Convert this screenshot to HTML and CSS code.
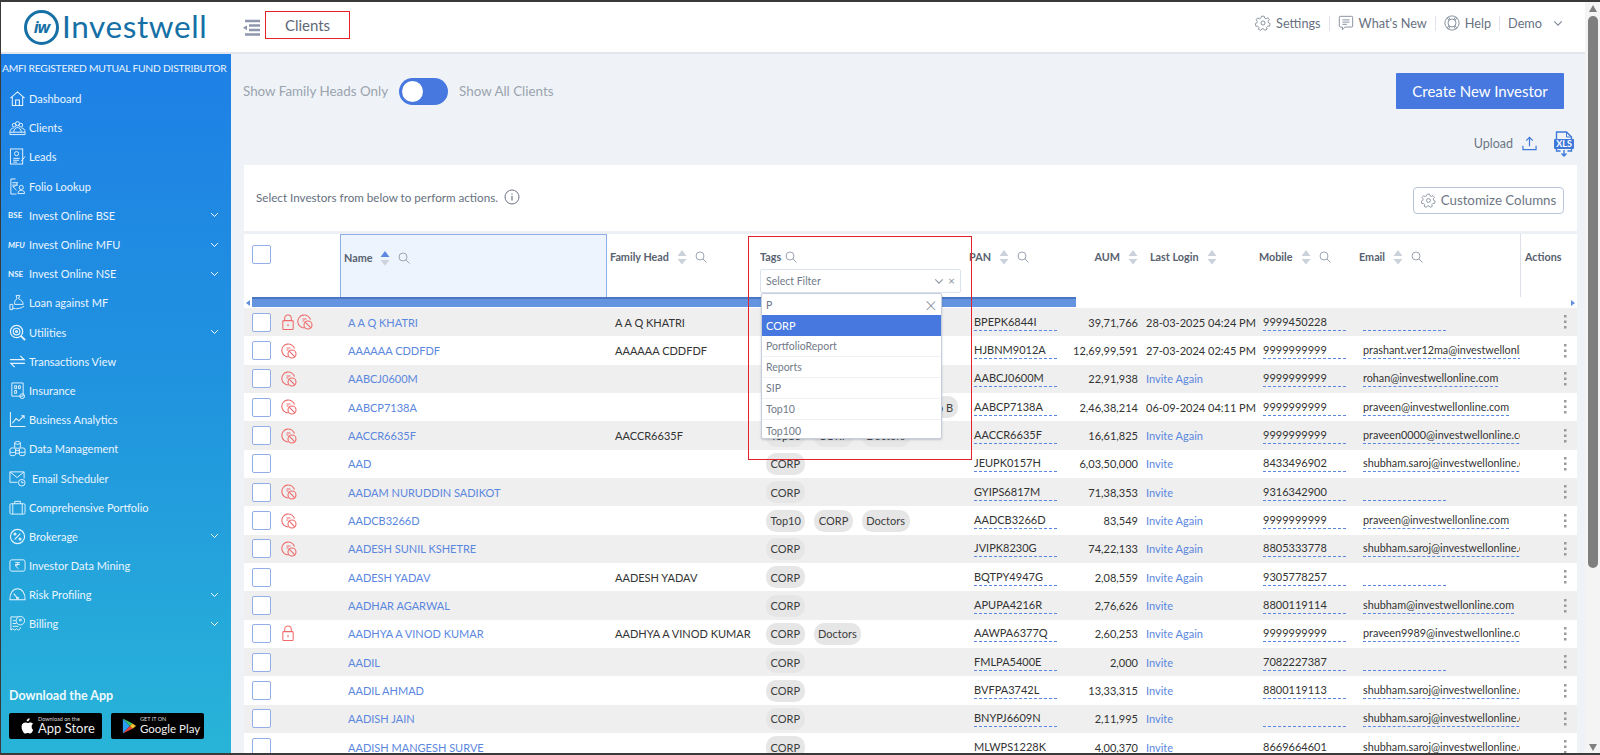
FILE: index.html
```html
<!DOCTYPE html>
<html lang="en">
<head>
<meta charset="utf-8">
<title>Investwell - Clients</title>
<link rel="stylesheet" href="styles.css">
</head>
<body>
<svg class="defs" width="0" height="0" aria-hidden="true">
  <defs>
    <symbol id="i-home" viewBox="0 0 18 18"><path d="M1.5 8.5 9 2l7.5 6.500M3.500 7.500V16.500h11V7.500M7 16.500v-6h4v6" fill="none" stroke="currentColor" stroke-width="1.100"/></symbol>
    <symbol id="i-users" viewBox="0 0 18 18"><g fill="none" stroke="currentColor" stroke-width="1"><circle cx="5.500" cy="6.500" r="2"/><circle cx="12.500" cy="6.500" r="2"/><circle cx="9" cy="5" r="2.200"/><path d="M1 14c0-3 2-4.500 4-4.500M17 14c0-3-2-4.500-4-4.500M1 14h16v2.500H1zM5 14c0-3 2-5 4-5s4 2 4 5"/></g></symbol>
    <symbol id="i-lead" viewBox="0 0 18 18"><g fill="none" stroke="currentColor" stroke-width="1"><rect x="1.500" y="1" width="13" height="16"/><circle cx="8" cy="6" r="2.200"/><path d="M4.500 11h7M4.500 13h6M4.500 15h4M13 14l4-5"/></g></symbol>
    <symbol id="i-folio" viewBox="0 0 18 18"><g fill="none" stroke="currentColor" stroke-width="1"><path d="M7 1H2v16h6M3.500 5h6M3.500 7.500h6M8.500 5c0 3-2 4-4.500 4L8 13"/><circle cx="13" cy="10" r="2.200"/><path d="M9.500 16.500c0-2.500 1.500-3.500 3.500-3.500s3.500 1 3.500 3.500z"/></g></symbol>
    <symbol id="i-loan" viewBox="0 0 18 18"><g fill="none" stroke="currentColor" stroke-width="1"><path d="M7.500 1.500h4L10 5c3 1 5 3.500 5 6H6c-.500-2.500.500-5 2.500-6z"/><path d="M1 11h3v5.500H1zM4 15c4 1 7 1 12-2"/></g></symbol>
    <symbol id="i-util" viewBox="0 0 18 18"><g fill="none" stroke="currentColor" stroke-width="1.300"><circle cx="8" cy="8" r="6.500"/><circle cx="8" cy="8" r="3.500"/><circle cx="8" cy="8" r="1"/><path d="m12.500 12.500 4.500 4.500" stroke-width="2"/></g></symbol>
    <symbol id="i-swap" viewBox="0 0 18 18"><path d="M1 7h15l-4-4M17 11H2l4 4" fill="none" stroke="currentColor" stroke-width="1.300"/></symbol>
    <symbol id="i-ins" viewBox="0 0 18 18"><g fill="none" stroke="currentColor" stroke-width="1"><path d="M3 1h12v14H3z"/><path d="M6 4h2v3H6zM10 4h2v3h-2zM6 9h2v3H6z"/><circle cx="14" cy="15" r="2.500"/></g></symbol>
    <symbol id="i-chart" viewBox="0 0 18 18"><path d="M1.500 1v15.500h16M3.500 13l4-5 3 2.500 5-5M13 5h3v3" fill="none" stroke="currentColor" stroke-width="1.100"/></symbol>
    <symbol id="i-data" viewBox="0 0 18 18"><g fill="none" stroke="currentColor" stroke-width="1"><ellipse cx="9" cy="3" rx="3" ry="1.500"/><path d="M6 3v5c0 1 6 1 6 0V3M1 9.500c0-1.500 6-1.500 6 0v6c0 1.500-6 1.500-6 0zM11 9.500c0-1.500 6-1.500 6 0v6c0 1.500-6 1.500-6 0zM7 11h4M7 14h4M1 12.500c1 1 5 1 6 0M11 12.500c1 1 5 1 6 0"/></g></symbol>
    <symbol id="i-mail" viewBox="0 0 18 18"><g fill="none" stroke="currentColor" stroke-width="1"><path d="M9 13H1V2h15v7"/><path d="m1 2 7.500 6L16 2"/><circle cx="13.500" cy="13.500" r="3.500"/><path d="M13.500 11.500v2h2"/></g></symbol>
    <symbol id="i-case" viewBox="0 0 18 18"><g fill="none" stroke="currentColor" stroke-width="1"><rect x="1" y="5" width="16" height="11" rx="1.500"/><path d="M6 5V2.500h6V5M4 5v11M14 5v11"/></g></symbol>
    <symbol id="i-pct" viewBox="0 0 18 18"><g fill="none" stroke="currentColor" stroke-width="1.200"><circle cx="9" cy="9" r="7.500"/><path d="m6 12 6-6"/><circle cx="6.300" cy="6.300" r="1"/><circle cx="11.700" cy="11.700" r="1"/></g></symbol>
    <symbol id="i-rupee" viewBox="0 0 18 18"><g fill="none" stroke="currentColor" stroke-width="1"><rect x="1" y="3" width="16" height="12" rx="2"/><path d="M6.500 6h5M6.500 8h5M8 6c2 0 2 3 0 3H6.500L10 12.500"/></g></symbol>
    <symbol id="i-gauge" viewBox="0 0 18 18"><g fill="none" stroke="currentColor" stroke-width="1.100"><path d="M1 14.500C.5 8 4 3 9 3s8.500 5 8 11.500z"/><path d="M5 8l4 5"/><circle cx="9" cy="13" r="1"/></g></symbol>
    <symbol id="i-bill" viewBox="0 0 18 18"><g fill="none" stroke="currentColor" stroke-width="1"><path d="M2 2h8M2 2v14l2-1.500 2 1.500 2-1.500 2 1.500 2-1.500V13"/><circle cx="12" cy="6" r="4.500"/><path d="M4 6h3M4 9h4M4 12h6M10.500 4.500h3M10.500 6h3"/></g></symbol>
    <symbol id="i-chev" viewBox="0 0 12 8"><path d="m1.500 1.500 4.500 4.500 4.500-4.500" fill="none" stroke="currentColor" stroke-width="1.300"/></symbol>
    <symbol id="i-gear" viewBox="0 0 18 18"><g fill="none" stroke="currentColor" stroke-width="1"><path d="m7.500 1h3l.5 2.200 1.700.8 2-1.100 1.800 2.300-1.400 1.700.4 1.900 2 1-.7 2.900-2.300.1-1.200 1.500.5 2.200-2.700 1.200-1.400-1.800h-1.900l-1.400 1.800-2.700-1.200.5-2.200L2.900 12.900.6 12.800l-.7-2.900 2-1 .4-1.900L.9 5.300l1.800-2.300 2 1.100 1.700-.8z" transform="translate(.4 .4) scale(.95)"/><circle cx="9" cy="9" r="2.300"/></g></symbol>
    <symbol id="i-msg" viewBox="0 0 18 18"><g fill="none" stroke="currentColor" stroke-width="1"><path d="M2.500 1.500h13a1 1 0 0 1 1 1v10a1 1 0 0 1-1 1H8l-3 3v-3H2.500a1 1 0 0 1-1-1v-10a1 1 0 0 1 1-1z"/><path d="M5 5.500h8M5 8h8M5 10.500h5"/></g></symbol>
    <symbol id="i-help" viewBox="0 0 18 18"><g fill="none" stroke="currentColor" stroke-width="1"><circle cx="9" cy="9" r="8"/><circle cx="9" cy="9" r="4.500"/><path d="m3.500 3.500 2.500 2.500M14.500 3.500 12 6M3.500 14.500 6 12M14.500 14.500 12 12M5 2l2 3M13 2l-2 3M5 16l2-3M13 16l-2-3"/></g></symbol>
    <symbol id="i-search" viewBox="0 0 12 12"><g fill="none" stroke="currentColor" stroke-width="1"><circle cx="5" cy="5" r="4"/><path d="m8 8 3.500 3.500"/></g></symbol>
    <symbol id="i-sort" viewBox="0 0 10 18"><path d="M5 2 9.500 8H.5zM5 16.500.5 11h9z" fill="#cbd2dc"/></symbol>
    <symbol id="i-sort-up" viewBox="0 0 10 18"><path d="M5 2 9.500 8H.5z" fill="#5d8ae0"/><path d="M5 16.500.5 11h9z" fill="#cbd2dc"/></symbol>
    <symbol id="i-lock" viewBox="0 0 14 18"><g fill="none" stroke="#ee6a6a" stroke-width="1.100"><rect x="1.500" y="7" width="11" height="9.500" rx="1"/><path d="M3.500 7V4.500a3.500 3.500 0 0 1 7 0V7"/><path d="M7 10.500v2.500"/></g></symbol>
    <symbol id="i-block" viewBox="0 0 16 16"><g fill="none" stroke="#ee6a6a" stroke-width="1.100"><path d="M7.500 14a6.500 6.500 0 1 1 6-8.500"/><circle cx="11" cy="11" r="4"/><path d="m8.200 8.200 5.600 5.600"/><path d="M5.500 5h4M5.500 7h2"/></g></symbol>
    <symbol id="i-dots" viewBox="0 0 4 16"><g fill="#9a9a9a"><rect x="1" y="1" width="2.500" height="2.500"/><rect x="1" y="6.500" width="2.500" height="2.500"/><rect x="1" y="12" width="2.500" height="2.500"/></g></symbol>
  </defs>
</svg>

<div class="app">
  <div class="page">
    <header class="topbar">
      <div class="logo">
        <span class="logo-mark">iw</span>
        <span class="logo-word">Investwell</span>
      </div>
      <svg class="menu-icon" viewBox="0 0 18 18"><path d="M3 2h15M7 6.500h11M7 11h11M3 15.500h15" stroke="#8e97ad" stroke-width="2.400"/><path d="M1 8.700 5 6.200v5z" fill="#8e97ad"/></svg>
      <h1 class="page-title">Clients</h1>
      <nav class="topnav">
        <a class="topnav-item"><svg class="tn-icon"><use href="#i-gear"/></svg>Settings</a>
        <a class="topnav-item"><svg class="tn-icon"><use href="#i-msg"/></svg>What's New</a>
        <a class="topnav-item"><svg class="tn-icon"><use href="#i-help"/></svg>Help</a>
        <a class="topnav-item topnav-last">Demo<svg class="tn-chev"><use href="#i-chev"/></svg></a>
      </nav>
    </header>

    <div class="body">
      <aside class="sidebar">
        <div class="amfi">AMFI REGISTERED MUTUAL FUND DISTRIBUTOR</div>
        <ul class="side-menu">
          <li class="side-item"><svg class="side-icon"><use href="#i-home"/></svg>Dashboard</li>
          <li class="side-item"><svg class="side-icon"><use href="#i-users"/></svg>Clients</li>
          <li class="side-item"><svg class="side-icon"><use href="#i-lead"/></svg>Leads</li>
          <li class="side-item"><svg class="side-icon"><use href="#i-folio"/></svg>Folio Lookup</li>
          <li class="side-item"><span class="side-tag">BSE</span>Invest Online BSE<svg class="side-chev"><use href="#i-chev"/></svg></li>
          <li class="side-item"><span class="side-tag side-tag-i">MFU</span>Invest Online MFU<svg class="side-chev"><use href="#i-chev"/></svg></li>
          <li class="side-item"><span class="side-tag">NSE</span>Invest Online NSE<svg class="side-chev"><use href="#i-chev"/></svg></li>
          <li class="side-item"><svg class="side-icon"><use href="#i-loan"/></svg>Loan against MF</li>
          <li class="side-item"><svg class="side-icon"><use href="#i-util"/></svg>Utilities<svg class="side-chev"><use href="#i-chev"/></svg></li>
          <li class="side-item"><svg class="side-icon"><use href="#i-swap"/></svg>Transactions View</li>
          <li class="side-item"><svg class="side-icon"><use href="#i-ins"/></svg>Insurance</li>
          <li class="side-item"><svg class="side-icon"><use href="#i-chart"/></svg>Business Analytics</li>
          <li class="side-item"><svg class="side-icon"><use href="#i-data"/></svg>Data Management</li>
          <li class="side-item side-item-wide"><svg class="side-icon"><use href="#i-mail"/></svg>Email Scheduler</li>
          <li class="side-item"><svg class="side-icon"><use href="#i-case"/></svg>Comprehensive Portfolio</li>
          <li class="side-item"><svg class="side-icon"><use href="#i-pct"/></svg>Brokerage<svg class="side-chev"><use href="#i-chev"/></svg></li>
          <li class="side-item"><svg class="side-icon"><use href="#i-rupee"/></svg>Investor Data Mining</li>
          <li class="side-item"><svg class="side-icon"><use href="#i-gauge"/></svg>Risk Profiling<svg class="side-chev"><use href="#i-chev"/></svg></li>
          <li class="side-item"><svg class="side-icon"><use href="#i-bill"/></svg>Billing<svg class="side-chev"><use href="#i-chev"/></svg></li>
        </ul>
        <div class="app-links">
          <div class="app-title">Download the App</div>
          <div class="badges">
            <div class="badge">
              <svg class="badge-icon" viewBox="0 0 16 18"><path d="M11 0c.2 1.800-1.500 3.800-3.400 3.600C7.400 1.900 9.200.1 11 0zM13.300 9.500c0-2 1.500-2.900 1.700-3-1-1.400-2.500-1.600-3-1.600-1.300-.1-2.500.8-3.100.8-.7 0-1.700-.8-2.800-.8C4.600 5 3.200 5.800 2.500 7.100c-1.500 2.600-.4 6.400 1 8.500.7 1 1.500 2.200 2.600 2.100 1 0 1.400-.7 2.700-.7s1.600.7 2.700.7 1.800-1 2.500-2c.8-1.100 1.100-2.300 1.100-2.300s-1.800-.8-1.800-3.900z" fill="#fff"/></svg>
              <div class="badge-text"><span class="badge-small">Download on the</span><span class="badge-big">App Store</span></div>
            </div>
            <div class="badge">
              <svg class="badge-icon" viewBox="0 0 16 18"><path d="M1 .5v17L9 9z" fill="#2a9df4"/><path d="M1 .5 9 9l3-3z" fill="#37c46c"/><path d="M1 17.500 9 9l3 3z" fill="#e8413c"/><path d="m12 6-3 3 3 3 4-3z" fill="#fbc02d"/></svg>
              <div class="badge-text"><span class="badge-small">GET IT ON</span><span class="badge-big badge-big-g">Google Play</span></div>
            </div>
          </div>
        </div>
      </aside>

      <main class="main">
        <div class="toolbar">
          <div class="toggle-group">
            <span class="toggle-label">Show Family Heads Only</span>
            <span class="toggle"><span class="toggle-knob"></span></span>
            <span class="toggle-label">Show All Clients</span>
          </div>
          <button class="btn-primary">Create New Investor</button>
        </div>
        <div class="uploadbar">
          <span class="upload-text">Upload</span>
          <svg class="upload-icon" viewBox="0 0 16 16"><path d="M8 11V2M4.500 5 8 1.500 11.500 5M1 10.500V14.500h14v-4" fill="none" stroke="#3f78d8" stroke-width="1.300"/></svg>
          <span class="xls">
            <svg class="xls-file" viewBox="0 0 20 26"><path d="M2.500 8V1h10l5 5v2M2.500 18v2h4M17.500 18v2h-4M10 19v6M7.500 22.500 10 25l2.500-2.500" fill="none" stroke="#3f78d8" stroke-width="1.400"/><path d="M12.500 1v5h5" fill="none" stroke="#3f78d8" stroke-width="1"/><rect y="8" width="20" height="10" rx="1" fill="#3f78d8"/></svg>
            <span class="xls-label">XLS</span>
          </span>
        </div>

        <section class="card">
          <div class="card-top">
            <div class="card-hint">Select Investors from below to perform actions.
              <svg class="info-icon" viewBox="0 0 16 16"><circle cx="8" cy="8" r="7" fill="none" stroke="#6d7684" stroke-width="1"/><path d="M8 7v4.500M8 4.500v1.200" stroke="#6d7684" stroke-width="1.200"/></svg>
            </div>
            <button class="btn-outline"><svg class="cc-icon"><use href="#i-gear"/></svg>Customize Columns</button>
          </div>

          <div class="table">
            <div class="grid thead">
              <div class="th th-select"><span class="check"></span></div>
              <div class="th th-name">Name<svg class="sort"><use href="#i-sort-up"/></svg><svg class="find"><use href="#i-search"/></svg></div>
              <div class="th th-family">Family Head<svg class="sort"><use href="#i-sort"/></svg><svg class="find"><use href="#i-search"/></svg></div>
              <div class="th th-tags">Tags<svg class="find find-tight"><use href="#i-search"/></svg>
                <div class="filter"><span>Select Filter</span><svg class="filter-chev"><use href="#i-chev"/></svg><span class="filter-x">×</span></div>
                <div class="dropdown">
                  <div class="dd-search"><span>P</span><span class="dd-close">×</span></div>
                  <div class="dd-item dd-active">CORP</div>
                  <div class="dd-item">PortfolioReport</div>
                  <div class="dd-item">Reports</div>
                  <div class="dd-item">SIP</div>
                  <div class="dd-item">Top10</div>
                  <div class="dd-item dd-last">Top100</div>
                </div>
                <div class="highlight"></div>
              </div>
              <div class="th th-pan">PAN<svg class="sort"><use href="#i-sort"/></svg><svg class="find"><use href="#i-search"/></svg></div>
              <div class="th th-aum">AUM<svg class="sort"><use href="#i-sort"/></svg></div>
              <div class="th th-login">Last Login<svg class="sort"><use href="#i-sort"/></svg></div>
              <div class="th th-mobile">Mobile<svg class="sort"><use href="#i-sort"/></svg><svg class="find"><use href="#i-search"/></svg></div>
              <div class="th th-email">Email<svg class="sort"><use href="#i-sort"/></svg><svg class="find"><use href="#i-search"/></svg></div>
              <div class="th th-actions">Actions</div>
            </div>

            <div class="hscroll">
              <span class="hs-arrow hs-left"></span>
              <span class="hs-track"><span class="hs-thumb"></span></span>
              <span class="hs-arrow hs-right"></span>
            </div>

            <div class="grid row"><div class="c c-sel"><span class="check"></span><svg class="lock"><use href="#i-lock"/></svg><svg class="blk"><use href="#i-block"/></svg></div><a class="c c-name">A A Q KHATRI</a><div class="c c-fam">A A Q KHATRI</div><div class="c c-tags"><span class="chip">CORP</span></div><div class="c c-pan"><span class="ul">BPEPK6844I</span></div><div class="c c-aum">39,71,766</div><div class="c c-log">28-03-2025 04:24 PM</div><div class="c c-mob"><span class="ul">9999450228</span></div><div class="c c-mail"><span class="ul"></span></div><div class="c c-act"><svg class="dots"><use href="#i-dots"/></svg></div></div>
            <div class="grid row"><div class="c c-sel"><span class="check"></span><svg class="blk"><use href="#i-block"/></svg></div><a class="c c-name">AAAAAA CDDFDF</a><div class="c c-fam">AAAAAA CDDFDF</div><div class="c c-tags"><span class="chip">CORP</span></div><div class="c c-pan"><span class="ul">HJBNM9012A</span></div><div class="c c-aum">12,69,99,591</div><div class="c c-log">27-03-2024 02:45 PM</div><div class="c c-mob"><span class="ul">9999999999</span></div><div class="c c-mail"><span class="ul">prashant.ver12ma@investwellonline.com</span></div><div class="c c-act"><svg class="dots"><use href="#i-dots"/></svg></div></div>
            <div class="grid row"><div class="c c-sel"><span class="check"></span><svg class="blk"><use href="#i-block"/></svg></div><a class="c c-name">AABCJ0600M</a><div class="c c-fam"></div><div class="c c-tags"><span class="chip">CORP</span></div><div class="c c-pan"><span class="ul">AABCJ0600M</span></div><div class="c c-aum">22,91,938</div><a class="c c-log c-inv">Invite Again</a><div class="c c-mob"><span class="ul">9999999999</span></div><div class="c c-mail"><span class="ul">rohan@investwellonline.com</span></div><div class="c c-act"><svg class="dots"><use href="#i-dots"/></svg></div></div>
            <div class="grid row"><div class="c c-sel"><span class="check"></span><svg class="blk"><use href="#i-block"/></svg></div><a class="c c-name">AABCP7138A</a><div class="c c-fam"></div><div class="c c-tags"><span class="chip">CORP</span><span class="chip">Top10</span><span class="chip">Category Group B</span></div><div class="c c-pan"><span class="ul">AABCP7138A</span></div><div class="c c-aum">2,46,38,214</div><div class="c c-log">06-09-2024 04:11 PM</div><div class="c c-mob"><span class="ul">9999999999</span></div><div class="c c-mail"><span class="ul">praveen@investwellonline.com</span></div><div class="c c-act"><svg class="dots"><use href="#i-dots"/></svg></div></div>
            <div class="grid row"><div class="c c-sel"><span class="check"></span><svg class="blk"><use href="#i-block"/></svg></div><a class="c c-name">AACCR6635F</a><div class="c c-fam">AACCR6635F</div><div class="c c-tags"><span class="chip">Top10</span><span class="chip">CORP</span><span class="chip">Doctors</span></div><div class="c c-pan"><span class="ul">AACCR6635F</span></div><div class="c c-aum">16,61,825</div><a class="c c-log c-inv">Invite Again</a><div class="c c-mob"><span class="ul">9999999999</span></div><div class="c c-mail"><span class="ul">praveen0000@investwellonline.com</span></div><div class="c c-act"><svg class="dots"><use href="#i-dots"/></svg></div></div>
            <div class="grid row"><div class="c c-sel"><span class="check"></span></div><a class="c c-name">AAD</a><div class="c c-fam"></div><div class="c c-tags"><span class="chip">CORP</span></div><div class="c c-pan"><span class="ul">JEUPK0157H</span></div><div class="c c-aum">6,03,50,000</div><a class="c c-log c-inv">Invite</a><div class="c c-mob"><span class="ul">8433496902</span></div><div class="c c-mail"><span class="ul">shubham.saroj@investwellonline.com</span></div><div class="c c-act"><svg class="dots"><use href="#i-dots"/></svg></div></div>
            <div class="grid row"><div class="c c-sel"><span class="check"></span><svg class="blk"><use href="#i-block"/></svg></div><a class="c c-name">AADAM NURUDDIN SADIKOT</a><div class="c c-fam"></div><div class="c c-tags"><span class="chip">CORP</span></div><div class="c c-pan"><span class="ul">GYIPS6817M</span></div><div class="c c-aum">71,38,353</div><a class="c c-log c-inv">Invite</a><div class="c c-mob"><span class="ul">9316342900</span></div><div class="c c-mail"><span class="ul"></span></div><div class="c c-act"><svg class="dots"><use href="#i-dots"/></svg></div></div>
            <div class="grid row"><div class="c c-sel"><span class="check"></span><svg class="blk"><use href="#i-block"/></svg></div><a class="c c-name">AADCB3266D</a><div class="c c-fam"></div><div class="c c-tags"><span class="chip">Top10</span><span class="chip">CORP</span><span class="chip">Doctors</span></div><div class="c c-pan"><span class="ul">AADCB3266D</span></div><div class="c c-aum">83,549</div><a class="c c-log c-inv">Invite Again</a><div class="c c-mob"><span class="ul">9999999999</span></div><div class="c c-mail"><span class="ul">praveen@investwellonline.com</span></div><div class="c c-act"><svg class="dots"><use href="#i-dots"/></svg></div></div>
            <div class="grid row"><div class="c c-sel"><span class="check"></span><svg class="blk"><use href="#i-block"/></svg></div><a class="c c-name">AADESH SUNIL KSHETRE</a><div class="c c-fam"></div><div class="c c-tags"><span class="chip">CORP</span></div><div class="c c-pan"><span class="ul">JVIPK8230G</span></div><div class="c c-aum">74,22,133</div><a class="c c-log c-inv">Invite Again</a><div class="c c-mob"><span class="ul">8805333778</span></div><div class="c c-mail"><span class="ul">shubham.saroj@investwellonline.com</span></div><div class="c c-act"><svg class="dots"><use href="#i-dots"/></svg></div></div>
            <div class="grid row"><div class="c c-sel"><span class="check"></span></div><a class="c c-name">AADESH YADAV</a><div class="c c-fam">AADESH YADAV</div><div class="c c-tags"><span class="chip">CORP</span></div><div class="c c-pan"><span class="ul">BQTPY4947G</span></div><div class="c c-aum">2,08,559</div><a class="c c-log c-inv">Invite Again</a><div class="c c-mob"><span class="ul">9305778257</span></div><div class="c c-mail"><span class="ul"></span></div><div class="c c-act"><svg class="dots"><use href="#i-dots"/></svg></div></div>
            <div class="grid row"><div class="c c-sel"><span class="check"></span></div><a class="c c-name">AADHAR AGARWAL</a><div class="c c-fam"></div><div class="c c-tags"><span class="chip">CORP</span></div><div class="c c-pan"><span class="ul">APUPA4216R</span></div><div class="c c-aum">2,76,626</div><a class="c c-log c-inv">Invite</a><div class="c c-mob"><span class="ul">8800119114</span></div><div class="c c-mail"><span class="ul">shubham@investwellonline.com</span></div><div class="c c-act"><svg class="dots"><use href="#i-dots"/></svg></div></div>
            <div class="grid row"><div class="c c-sel"><span class="check"></span><svg class="lock"><use href="#i-lock"/></svg></div><a class="c c-name">AADHYA A VINOD KUMAR</a><div class="c c-fam">AADHYA A VINOD KUMAR</div><div class="c c-tags"><span class="chip">CORP</span><span class="chip">Doctors</span></div><div class="c c-pan"><span class="ul">AAWPA6377Q</span></div><div class="c c-aum">2,60,253</div><a class="c c-log c-inv">Invite Again</a><div class="c c-mob"><span class="ul">9999999999</span></div><div class="c c-mail"><span class="ul">praveen9989@investwellonline.com</span></div><div class="c c-act"><svg class="dots"><use href="#i-dots"/></svg></div></div>
            <div class="grid row"><div class="c c-sel"><span class="check"></span></div><a class="c c-name">AADIL</a><div class="c c-fam"></div><div class="c c-tags"><span class="chip">CORP</span></div><div class="c c-pan"><span class="ul">FMLPA5400E</span></div><div class="c c-aum">2,000</div><a class="c c-log c-inv">Invite</a><div class="c c-mob"><span class="ul">7082227387</span></div><div class="c c-mail"><span class="ul"></span></div><div class="c c-act"><svg class="dots"><use href="#i-dots"/></svg></div></div>
            <div class="grid row"><div class="c c-sel"><span class="check"></span></div><a class="c c-name">AADIL AHMAD</a><div class="c c-fam"></div><div class="c c-tags"><span class="chip">CORP</span></div><div class="c c-pan"><span class="ul">BVFPA3742L</span></div><div class="c c-aum">13,33,315</div><a class="c c-log c-inv">Invite</a><div class="c c-mob"><span class="ul">8800119113</span></div><div class="c c-mail"><span class="ul">shubham.saroj@investwellonline.com</span></div><div class="c c-act"><svg class="dots"><use href="#i-dots"/></svg></div></div>
            <div class="grid row"><div class="c c-sel"><span class="check"></span></div><a class="c c-name">AADISH JAIN</a><div class="c c-fam"></div><div class="c c-tags"><span class="chip">CORP</span></div><div class="c c-pan"><span class="ul">BNYPJ6609N</span></div><div class="c c-aum">2,11,995</div><a class="c c-log c-inv">Invite</a><div class="c c-mob"><span class="ul"></span></div><div class="c c-mail"><span class="ul">shubham.saroj@investwellonline.com</span></div><div class="c c-act"><svg class="dots"><use href="#i-dots"/></svg></div></div>
            <div class="grid row"><div class="c c-sel"><span class="check"></span></div><a class="c c-name">AADISH MANGESH SURVE</a><div class="c c-fam"></div><div class="c c-tags"><span class="chip">CORP</span></div><div class="c c-pan"><span class="ul">MLWPS1228K</span></div><div class="c c-aum">4,00,370</div><a class="c c-log c-inv">Invite</a><div class="c c-mob"><span class="ul">8669664601</span></div><div class="c c-mail"><span class="ul">shubham.saroj@investwellonline.com</span></div><div class="c c-act"><svg class="dots"><use href="#i-dots"/></svg></div></div>
          </div>
        </section>
      </main>
    </div>
  </div>
  <div class="vscroll">
    <span class="vs-up"></span>
    <span class="vs-thumb"></span>
    <span class="vs-down"></span>
  </div>
</div>
</body>
</html>
```

FILE: styles.css
```css
* { box-sizing: border-box; }
html, body { margin: 0; height: 100%; overflow: hidden; }
body { font-family: "Lato", "Liberation Sans", sans-serif; color: #333; background: #fff; }
.defs { position: absolute; }
ul { list-style: none; margin: 0; padding: 0; }
button { font-family: inherit; cursor: pointer; }

.app { display: flex; height: 755px; border-top: 2px solid #3a3a3a; border-left: 1px solid #3a3a3a; border-bottom: 2px solid #3a3a3a; }
.page { flex: 1; min-width: 0; display: flex; flex-direction: column; }

/* Top bar */
.topbar { height: 52px; flex: none; display: flex; align-items: center; background: #fff; border-bottom: 2px solid #e2e6ee; }
.logo { width: 241px; flex: none; display: flex; align-items: center; padding-left: 23px; color: #1570a6; }
.logo-mark { width: 35px; height: 35px; border: 3.500px solid #1570a6; border-radius: 50%; display: flex; align-items: center; justify-content: center; font: italic 700 16px/1 "Open Sans", sans-serif; letter-spacing: -1px; flex: none; }
.logo-word { font: 400 31.500px/1 "Lato", sans-serif; letter-spacing: .6px; margin-left: 3px; }
.menu-icon { width: 18px; height: 18px; flex: none; margin-top: 1px; }
.page-title { width: 85px; height: 28px; margin: 0 0 4px 5px; flex: none; border: 1px solid #e8202a; font-size: 15px; font-weight: 400; color: #5e6877; display: flex; align-items: center; justify-content: center; }
.topnav { margin-left: auto; display: flex; align-items: center; padding-right: 22px; color: #68717f; font-size: 12.700px; margin-bottom: 8px; }
.topnav-item { display: flex; align-items: center; gap: 5px; padding: 0 8px; border-right: 1px solid #dfe3ea; height: 15px; white-space: nowrap; }
.topnav-last { border-right: 0; gap: 11px; padding-right: 0; }
.tn-icon { width: 16px; height: 16px; color: #7d8796; flex: none; }
.tn-chev { width: 10px; height: 7px; color: #7d8796; }

.body { flex: 1; min-height: 0; display: flex; }

/* Sidebar */
.sidebar { width: 230px; flex: none; display: flex; flex-direction: column; color: #fff; background: linear-gradient(180deg, #1e80e6 0%, #2092df 45%, #28b4d8 100%); padding-bottom: 14px; }
.amfi { font-size: 10.300px; letter-spacing: -.25px; line-height: 14px; padding: 7px 0 0 1px; white-space: nowrap; height: 30px; color: #eaf4ff; }
.side-item { height: 29.200px; display: flex; align-items: center; padding-left: 8px; font-size: 11px; color: #e9f5ff; white-space: nowrap; }
.side-icon { width: 17px; height: 17px; margin-right: 3px; flex: none; color: #e8f4ff; }
.side-item-wide .side-icon { margin-right: 6px; }
.side-tag { width: 21px; margin-left: -1px; font-size: 8px; font-weight: 700; flex: none; }
.side-tag-i { font-style: italic; }
.side-chev { width: 9px; height: 6px; margin-left: auto; margin-right: 12px; color: #fff; }
.app-links { margin-top: auto; padding-left: 8px; }
.app-title { font-size: 12.500px; font-weight: 700; margin-bottom: 10px; color: #eef9ff; }
.badges { display: flex; gap: 9px; }
.badge { width: 93px; height: 26px; background: #000; border-radius: 2px; display: flex; align-items: center; padding-left: 11px; gap: 4px; white-space: nowrap; }
.badge-icon { width: 14px; height: 16px; flex: none; }
.badge-text { display: flex; flex-direction: column; line-height: 1; }
.badge-small { font-size: 5.500px; color: #ddd; }
.badge-big { font-size: 13px; color: #eee; line-height: 13px; }
.badge-big-g { font-size: 11.500px; }

/* Main */
.main { flex: 1; min-width: 0; background: #eff3f8; padding: 0 0 0 13px; display: flex; flex-direction: column; }
.toolbar { height: 55px; flex: none; display: flex; justify-content: space-between; align-items: flex-end; padding-right: 21px; }
.toggle-group { display: flex; align-items: center; align-self: flex-end; height: 36px; color: #9aa3ae; font-size: 13.400px; gap: 0; margin: 0 0 0 -1px; }
.toggle { width: 49px; height: 27px; background: #4678e0; border-radius: 14px; padding: 3px; display: block; margin: 0 11px; }
.toggle-knob { display: block; width: 21px; height: 21px; background: #fff; border-radius: 50%; }
.btn-primary { width: 168px; height: 36px; background: #4678e0; color: #fff; border: 0; font-size: 15px; border-radius: 1px; }
.uploadbar { height: 56px; flex: none; display: flex; justify-content: flex-end; align-items: center; padding: 13px 11px 0 0; color: #6d7684; font-size: 12.500px; }
.upload-text { margin-right: 9px; }
.upload-icon { width: 15px; height: 15px; margin-right: 17px; }
.xls { width: 20px; height: 26px; position: relative; display: block; }
.xls-file { width: 20px; height: 26px; display: block; }
.xls-label { position: absolute; left: 0; top: 8px; width: 20px; color: #fff; font-size: 9px; font-weight: 700; line-height: 10px; text-align: center; }
.card { flex: 1; min-height: 0; background: #fff; margin-right: 8px; overflow: hidden; display: flex; flex-direction: column; }
.card-top { height: 69px; flex: none; display: flex; align-items: center; justify-content: space-between; padding: 4px 13px 0 12px; border-bottom: 3px solid #eceff3; }
.card-hint { font-size: 11.650px; color: #667080; display: flex; align-items: center; gap: 6px; margin-bottom: 6px; }
.info-icon { width: 16px; height: 16px; }
.btn-outline { width: 151px; height: 27px; background: #fff; border: 1px solid #b9c5da; border-radius: 4px; color: #6d7684; font-size: 13.300px; display: flex; align-items: center; justify-content: center; gap: 5px; padding: 0; }
.cc-icon { width: 15px; height: 15px; color: #7d8796; }

/* Table */
.table { flex: 1; min-height: 0; display: flex; flex-direction: column; }
.grid { display: grid; grid-template-columns: 96px 267px 152px 208px 94px 81px 114px 100px 164px 58px; flex: none; }
.thead { height: 63px; }
.th { font-size: 10.800px; font-weight: 700; color: #586270; padding-top: 16px; display: flex; align-items: flex-start; line-height: 14px; white-space: nowrap; position: relative; }
.th-select { padding: 11px 0 0 8px; }
.th-name { background: #edf4fd; border: 1px solid #8eaee6; border-bottom: 0; padding-left: 3px; }
.th-family { padding-left: 3px; }
.th-tags { padding-left: 1px; }
.th-pan { padding-left: 2px; }
.th-aum { justify-content: flex-end; padding-right: 4px; }
.th-login { padding-left: 8px; }
.th-mobile { padding-left: 3px; }
.th-email { padding-left: 3px; }
.th-actions { padding-left: 4px; border-left: 1px solid #dde1e7; }
.sort { width: 10px; height: 18px; margin: -2px 0 0 8px; flex: none; }
.find { width: 12px; height: 12px; margin: 1px 0 0 8px; color: #9da6b3; flex: none; }
.find-tight { margin-left: 4px; }
.check { display: block; width: 19px; height: 19px; border: 1.500px solid #92aee8; border-radius: 2px; background: #fff; flex: none; }

.filter { position: absolute; left: 1px; top: 35px; width: 201px; height: 24px; border: 1px solid #dbe3ef; border-radius: 2px; background: #fff; display: flex; align-items: center; padding: 0 4px 0 5px; font-size: 10.500px; font-weight: 400; color: #717a88; }
.filter-chev { width: 10px; height: 7px; margin-left: auto; color: #8d97a6; }
.filter-x { margin-left: 4px; color: #8d97a6; font-size: 12px; width: 8px; }
.dropdown { position: absolute; left: 2px; top: 59px; width: 181px; height: 146px; background: #fff; border: 1px solid #c6cedb; border-radius: 2px; box-shadow: 0 1px 2px rgba(60, 70, 90, .25); z-index: 3; font-weight: 400; font-size: 10.500px; color: #717a88; }
.dd-search { height: 21px; padding: 0 4px; display: flex; justify-content: space-between; align-items: center; color: #6b7483; }
.dd-close { font-size: 21px; color: #7f8794; line-height: 1; font-weight: 300; }
.dd-item { height: 21px; padding: 0 4px; display: flex; align-items: center; border-bottom: 1px solid #eef1f6; }
.dd-active { background: #4678e0; color: #fff; font-size: 11px; border-bottom: 0; }
.dd-last { border-bottom: 0; }
.highlight { position: absolute; left: -11px; top: 2px; width: 224px; height: 224px; border: 1.500px solid #e8202a; z-index: 4; pointer-events: none; }

.hscroll { height: 11px; flex: none; display: flex; align-items: center; background: #fff; }
.hs-arrow { width: 0; height: 0; border-top: 3.500px solid transparent; border-bottom: 3.500px solid transparent; flex: none; }
.hs-left { border-right: 4px solid #5f8fdd; margin-left: 2px; margin-right: 2px; }
.hs-right { border-left: 4px solid #5f8fdd; margin-right: 2px; margin-left: 2px; }
.hs-track { flex: 1; height: 11px; display: block; }
.hs-thumb { display: block; width: 824px; height: 10px; background: #6494e0; border-top: 2px solid #4a76c4; }

.row { height: 28.350px; align-items: center; background: #fff; font-size: 11px; color: #333; }
.row:nth-of-type(odd) { background: #efefef; }
.c { padding: 0 0 0 8px; white-space: nowrap; overflow: hidden; }
.c-sel { display: flex; align-items: center; padding-left: 8px; height: 100%; }
.c-sel .check { margin-right: 10px; }
.lock { width: 14px; height: 17px; margin-right: 2px; flex: none; }
.blk { width: 16px; height: 16px; flex: none; }
.c-name { color: #5b87de; }
.c-fam { color: #333; }
.c-tags { display: flex; gap: 9px; padding-left: 7px; overflow: visible; }
.chip { height: 22px; padding: 0 4.500px; background: #e6e6e6; border-radius: 10px; display: flex; align-items: center; font-size: 11px; color: #3d3d3d; }
.c-pan { padding-left: 7px; }
.c-mob { padding-left: 7px; }
.c-mail { padding-left: 7px; font-size: 10.800px; }
.ul { display: inline-block; min-width: 83px; min-height: 17px; line-height: 16px; border-bottom: 1px dashed #5b87de; vertical-align: top; }
.c-aum { text-align: right; padding: 0 4px 0 0; }
.c-log { padding-left: 4px; }
.c-inv { color: #5b87de; }
.c-act { padding-left: 43px; display: flex; align-items: center; }
.dots { width: 4px; height: 16px; }

/* Page scrollbar */
.vscroll { width: 15px; flex: none; background: #f4f4f4; position: relative; display: flex; flex-direction: column; align-items: center; padding-top: 3px; }
.vs-up { width: 0; height: 0; border-left: 4.500px solid transparent; border-right: 4.500px solid transparent; border-bottom: 7px solid #7f7f7f; flex: none; }
.vs-thumb { width: 10px; height: 552px; background: #7f7f7f; border-radius: 5px; margin-top: 4px; flex: none; }
.vs-down { margin-top: auto; width: 0; height: 0; border-left: 4.500px solid transparent; border-right: 4.500px solid transparent; border-top: 7px solid #7f7f7f; margin-bottom: 2px; flex: none; }
```
